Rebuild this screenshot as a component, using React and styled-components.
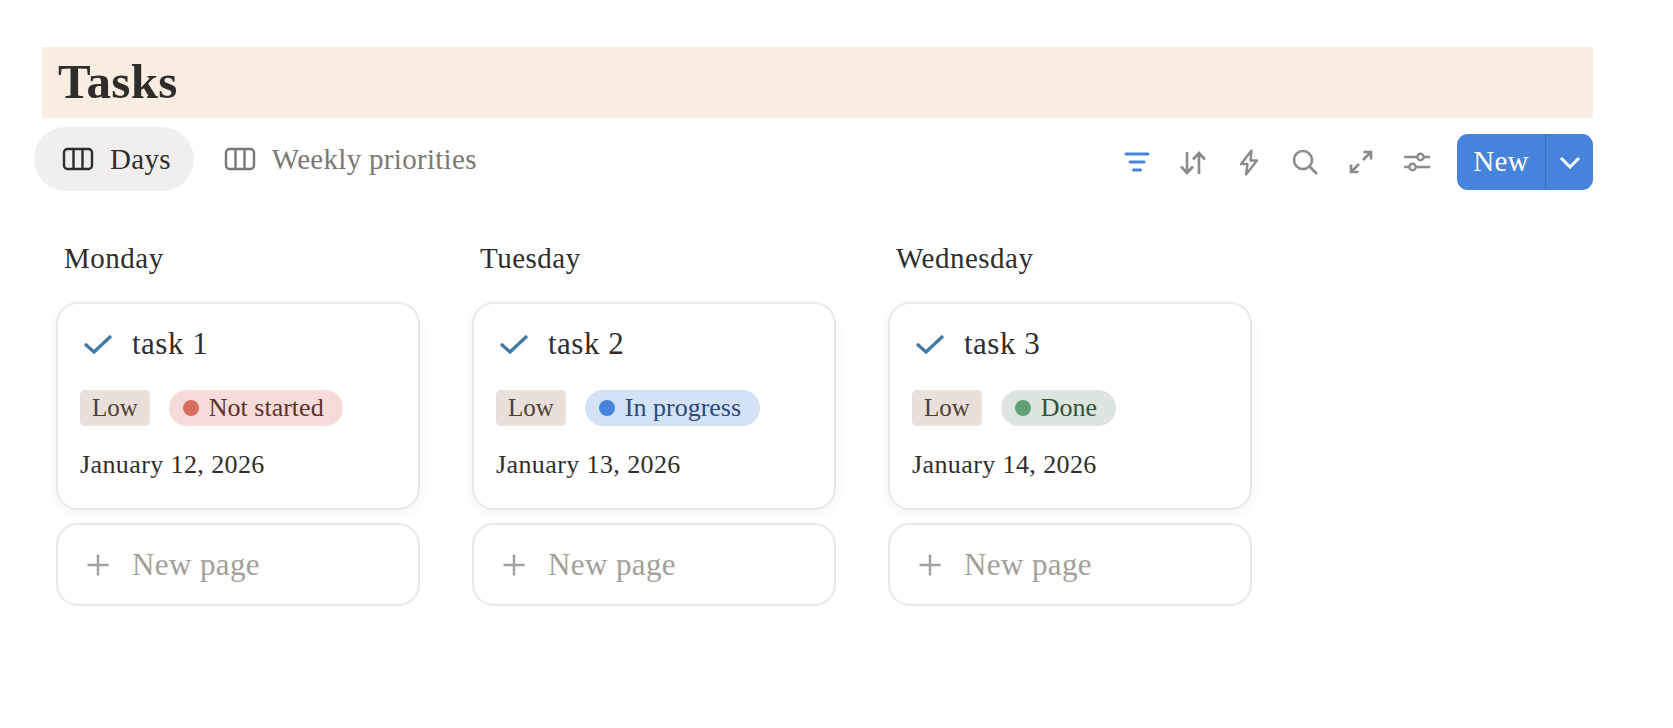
import React from 'react';
import styled, { createGlobalStyle } from 'styled-components';

const GlobalStyle = createGlobalStyle`
  html, body {
    margin: 0;
    padding: 0;
    background: #fff;
  }
  body {
    font-family: "Liberation Serif", "Times New Roman", serif;
    color: #2c2c2b;
  }
`;

const Page = styled.div`
  width: 1559px;
  margin-left: 34px;
  padding-top: 47px;
`;

const Banner = styled.div`
  margin-left: 8px;
  height: 71px;
  padding-left: 16px;
  display: flex;
  align-items: center;
  background: #f9ede1;
`;

const Title = styled.h1`
  margin: 0 0 3px;
  font-size: 49px;
  font-weight: 700;
  letter-spacing: 0.3px;
  color: #2f2d2a;
`;

const Toolbar = styled.div`
  display: flex;
  align-items: center;
  justify-content: space-between;
  margin-top: 9px;
  height: 64px;
`;

const Tabs = styled.div`
  display: flex;
  align-items: center;
  gap: 2px;
`;

const Tab = styled.div`
  height: 64px;
  padding: 0 23px 0 28px;
  border-radius: 32px;
  display: flex;
  align-items: center;
  gap: 16px;
  font-size: 29px;
  letter-spacing: 0.3px;
  background: ${({ $active }) => ($active ? '#f0efed' : 'transparent')};
  color: ${({ $active }) => ($active ? '#2f2e2c' : '#7b7873')};
`;

const Actions = styled.div`
  display: flex;
  align-items: center;
  padding-top: 6px;
`;

const ActionIcon = styled.span`
  width: 56px;
  height: 32px;
  display: flex;
  align-items: center;
  justify-content: center;
  color: ${({ $active }) => ($active ? '#4683da' : '#8e8b86')};
`;

const NewButton = styled.div`
  margin-left: 12px;
  width: 136px;
  height: 56px;
  display: flex;
  border-radius: 11px;
  overflow: hidden;
  background: #4683da;
  color: #fff;
`;

const NewLabel = styled.div`
  width: 88px;
  padding-bottom: 2px;
  display: flex;
  align-items: center;
  justify-content: center;
  font-size: 29px;
  letter-spacing: 0.3px;
  border-right: 1px solid #3a6fbd;
`;

const NewCaret = styled.div`
  flex: 1;
  display: flex;
  align-items: center;
  justify-content: center;
`;

const Board = styled.div`
  display: flex;
  gap: 52px;
  margin-top: 48px;
  margin-left: 22px;
`;

const Column = styled.div`
  width: 364px;
  display: flex;
  flex-direction: column;
`;

const ColumnTitle = styled.div`
  height: 38px;
  margin: 0 0 25px 8px;
  display: flex;
  align-items: center;
  font-size: 29px;
  letter-spacing: 0.5px;
  color: #2f2e2c;
`;

const Card = styled.div`
  box-sizing: border-box;
  height: 208px;
  padding: 21px 22px 0;
  border: 2px solid #e9e8e6;
  border-radius: 22px;
  background: #fff;
  box-shadow: 0 4px 14px rgba(40, 30, 20, 0.05);
`;

const CardTitle = styled.div`
  display: flex;
  align-items: center;
  gap: 19px;
  height: 38px;
  padding-left: 3px;
  font-size: 31px;
  letter-spacing: 0.5px;
  color: #2f2e2c;
`;

const Badges = styled.div`
  display: flex;
  align-items: center;
  gap: 19px;
  margin-top: 27px;
`;

const Priority = styled.span`
  height: 36px;
  padding: 0 12px;
  display: flex;
  align-items: center;
  border-radius: 5px;
  font-size: 25px;
  background: #e9e0d9;
  color: #4f4136;
`;

const Status = styled.span`
  height: 36px;
  padding: 0 19px 0 14px;
  display: flex;
  align-items: center;
  gap: 10px;
  border-radius: 18px;
  font-size: 26px;
  background: ${({ $bg }) => $bg};
  color: ${({ $fg }) => $fg};
`;

const Dot = styled.i`
  width: 16px;
  height: 16px;
  border-radius: 50%;
  background: ${({ $color }) => $color};
`;

const DateText = styled.div`
  margin-top: 24px;
  font-size: 26px;
  letter-spacing: 0.4px;
  color: #2f2e2c;
`;

const NewPage = styled.div`
  box-sizing: border-box;
  height: 83px;
  margin-top: 13px;
  padding-left: 28px;
  display: flex;
  align-items: center;
  gap: 22px;
  border: 2px solid #e9e8e6;
  border-radius: 22px;
  font-size: 31px;
  letter-spacing: 0.4px;
  color: #a3a09a;
`;

const BoardIcon = () => (
  <svg width="32" height="24" viewBox="0 0 32 24" fill="none" stroke="currentColor" strokeWidth="2.4">
    <rect x="2" y="2" width="28" height="20" rx="3.500" />
    <path d="M11.500 2v20M20.500 2v20" />
  </svg>
);

const FilterIcon = () => (
  <svg width="26" height="22" viewBox="0 0 26 22" fill="none" stroke="currentColor" strokeWidth="3" strokeLinecap="round">
    <path d="M2 3h22M6 11h14M9.500 19h7" />
  </svg>
);

const SortIcon = () => (
  <svg width="26" height="25" viewBox="0 0 26 25" fill="none" stroke="currentColor" strokeWidth="2.6">
    <path d="M7 2v21M1 16.500 7 23l6-6.500" />
    <path d="M19 24V3M13 9.500 19 3l6 6.500" />
  </svg>
);

const BoltIcon = () => (
  <svg width="20" height="27" viewBox="0 0 20 27" fill="none" stroke="currentColor" strokeWidth="2.4" strokeLinejoin="round">
    <path d="M12.500 1.500 2 15h6.500L7 25.500 18 11.500h-6.500z" />
  </svg>
);

const SearchIcon = () => (
  <svg width="26" height="26" viewBox="0 0 26 26" fill="none" stroke="currentColor" strokeWidth="2.6">
    <circle cx="11" cy="11" r="9" />
    <path d="m17.500 17.500 7.500 7.500" />
  </svg>
);

const ExpandIcon = () => (
  <svg width="24" height="24" viewBox="0 0 24 24" fill="none" stroke="currentColor" strokeWidth="2.6">
    <path d="M14 10 22 2M14.500 2H22v7.500" />
    <path d="M10 14 2 22M2 14.500V22h7.500" />
  </svg>
);

const SlidersIcon = () => (
  <svg width="26" height="20" viewBox="0 0 26 20" fill="none" stroke="currentColor" strokeWidth="2.4">
    <path d="M0 5h13M20 5h6M0 15h5M12 15h14" />
    <circle cx="16.500" cy="5" r="3.200" />
    <circle cx="8.500" cy="15" r="3.200" />
  </svg>
);

const CaretIcon = () => (
  <svg width="22" height="14" viewBox="0 0 22 14" fill="none" stroke="currentColor" strokeWidth="3">
    <path d="m2 3 9 9 9-9" />
  </svg>
);

const CheckIcon = () => (
  <svg width="30" height="22" viewBox="0 0 30 22" fill="none" stroke="#447ba6" strokeWidth="3.400">
    <path d="m2 11 9 8L28 3" />
  </svg>
);

const PlusIcon = () => (
  <svg width="24" height="24" viewBox="0 0 24 24" fill="none" stroke="currentColor" strokeWidth="2.4">
    <path d="M12 1.500v21M1.500 12h21" />
  </svg>
);

const columns = [
  {
    day: 'Monday',
    task: 'task 1',
    status: 'Not started',
    bg: '#f5dcdb',
    fg: '#5f2f2b',
    dot: '#d96f60',
    date: 'January 12, 2026'
  },
  {
    day: 'Tuesday',
    task: 'task 2',
    status: 'In progress',
    bg: '#d4e2f5',
    fg: '#2c4a78',
    dot: '#4683da',
    date: 'January 13, 2026'
  },
  {
    day: 'Wednesday',
    task: 'task 3',
    status: 'Done',
    bg: '#dce6de',
    fg: '#32543d',
    dot: '#5fa077',
    date: 'January 14, 2026'
  }
];

const App = () => (
  <Page>
    <GlobalStyle />
    <Banner>
      <Title>Tasks</Title>
    </Banner>
    <Toolbar>
      <Tabs>
        <Tab $active>
          <BoardIcon />
          Days
        </Tab>
        <Tab>
          <BoardIcon />
          Weekly priorities
        </Tab>
      </Tabs>
      <Actions>
        <ActionIcon $active><FilterIcon /></ActionIcon>
        <ActionIcon><SortIcon /></ActionIcon>
        <ActionIcon><BoltIcon /></ActionIcon>
        <ActionIcon><SearchIcon /></ActionIcon>
        <ActionIcon><ExpandIcon /></ActionIcon>
        <ActionIcon><SlidersIcon /></ActionIcon>
        <NewButton>
          <NewLabel>New</NewLabel>
          <NewCaret><CaretIcon /></NewCaret>
        </NewButton>
      </Actions>
    </Toolbar>
    <Board>
      {columns.map(col => (
        <Column key={col.day}>
          <ColumnTitle>{col.day}</ColumnTitle>
          <Card>
            <CardTitle>
              <CheckIcon />
              {col.task}
            </CardTitle>
            <Badges>
              <Priority>Low</Priority>
              <Status $bg={col.bg} $fg={col.fg}>
                <Dot $color={col.dot} />
                {col.status}
              </Status>
            </Badges>
            <DateText>{col.date}</DateText>
          </Card>
          <NewPage>
            <PlusIcon />
            New page
          </NewPage>
        </Column>
      ))}
    </Board>
  </Page>
);

export default App;
